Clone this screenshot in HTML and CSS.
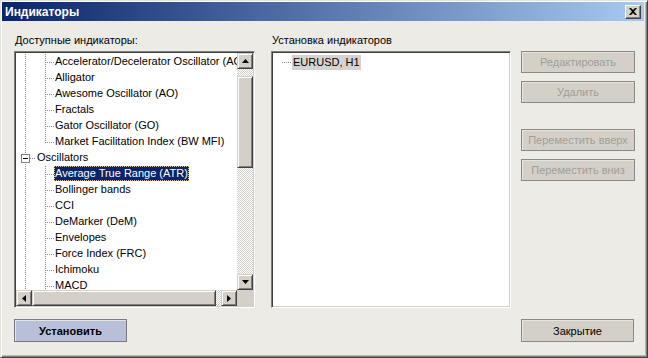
FILE: index.html
```html
<!DOCTYPE html>
<html>
<head>
  <title>Индикаторы</title>
  <meta charset="UTF-8">
  <link rel="stylesheet" href="styles.css">
</head>
<body>
  <div class="window">
    <div class="titlebar">
      <span class="title">Индикаторы</span>
      <button class="close-btn" title="Закрыть">
        <svg width="8" height="7" viewBox="0 0 8 7"><path d="M0 0h2l2 2 2-2h2L5 3.5 8 7H6L4 5 2 7H0l3-3.5z" fill="#000"/></svg>
      </button>
    </div>

    <div class="content">
      <div class="main-row">
        <!-- Доступные индикаторы -->
        <div class="panel panel-left">
          <div class="panel-label">Доступные индикаторы:</div>
          <div class="tree tree-scroll">
            <div class="tree-view">
              <div class="row"><span class="g g-line"></span><span class="g2 g-branch"></span><span class="label">Accelerator/Decelerator Oscillator (AC)</span></div>
              <div class="row"><span class="g g-line"></span><span class="g2 g-branch"></span><span class="label">Alligator</span></div>
              <div class="row"><span class="g g-line"></span><span class="g2 g-branch"></span><span class="label">Awesome Oscillator (AO)</span></div>
              <div class="row"><span class="g g-line"></span><span class="g2 g-branch"></span><span class="label">Fractals</span></div>
              <div class="row"><span class="g g-line"></span><span class="g2 g-branch"></span><span class="label">Gator Oscillator (GO)</span></div>
              <div class="row"><span class="g g-line"></span><span class="g2 g-last"></span><span class="label">Market Facilitation Index (BW MFI)</span></div>
              <div class="row"><span class="g g-line g-group"><span class="toggle"></span></span><span class="label">Oscillators</span></div>
              <div class="row"><span class="g g-line"></span><span class="g2 g-branch"></span><span class="label selected">Average True Range (ATR)</span></div>
              <div class="row"><span class="g g-line"></span><span class="g2 g-branch"></span><span class="label">Bollinger bands</span></div>
              <div class="row"><span class="g g-line"></span><span class="g2 g-branch"></span><span class="label">CCI</span></div>
              <div class="row"><span class="g g-line"></span><span class="g2 g-branch"></span><span class="label">DeMarker (DeM)</span></div>
              <div class="row"><span class="g g-line"></span><span class="g2 g-branch"></span><span class="label">Envelopes</span></div>
              <div class="row"><span class="g g-line"></span><span class="g2 g-branch"></span><span class="label">Force Index (FRC)</span></div>
              <div class="row"><span class="g g-line"></span><span class="g2 g-branch"></span><span class="label">Ichimoku</span></div>
              <div class="row"><span class="g g-line"></span><span class="g2 g-branch"></span><span class="label">MACD</span></div>
            </div>

            <div class="vscroll">
              <div class="sb-btn">
                <svg width="7" height="4" viewBox="0 0 7 4"><path d="M3.5 0L7 4H0z" fill="#000"/></svg>
              </div>
              <div class="sb-track sb-track-v"><div class="sb-thumb sb-thumb-v"></div></div>
              <div class="sb-btn">
                <svg width="7" height="4" viewBox="0 0 7 4"><path d="M0 0h7L3.5 4z" fill="#000"/></svg>
              </div>
            </div>

            <div class="hscroll">
              <div class="sb-btn">
                <svg width="4" height="7" viewBox="0 0 4 7"><path d="M0 3.5L4 0v7z" fill="#000"/></svg>
              </div>
              <div class="sb-track sb-track-h"><div class="sb-thumb sb-thumb-h"></div></div>
              <div class="sb-btn">
                <svg width="4" height="7" viewBox="0 0 4 7"><path d="M0 0l4 3.5L0 7z" fill="#000"/></svg>
              </div>
            </div>

            <div class="sb-corner"></div>
          </div>
        </div>

        <!-- Установка индикаторов -->
        <div class="panel panel-right">
          <div class="panel-label">Установка индикаторов</div>
          <div class="tree">
            <div class="tree-view">
              <div class="row"><span class="g3 g-single"></span><span class="label chart">EURUSD, H1</span></div>
            </div>
          </div>
        </div>

        <div class="side-buttons">
          <button class="btn btn-disabled">Редактировать</button>
          <button class="btn btn-disabled">Удалить</button>
          <button class="btn btn-disabled btn-spaced">Переместить вверх</button>
          <button class="btn btn-disabled">Переместить вниз</button>
        </div>
      </div>

      <div class="bottom-row">
        <button class="btn btn-default">Установить</button>
        <button class="btn">Закрытие</button>
      </div>
    </div>
  </div>
</body>
</html>
```

FILE: styles.css
```css
body {
  margin: 0;
  width: 648px;
  height: 358px;
  overflow: hidden;
  font-family: "Liberation Sans", Arial, sans-serif;
  font-size: 11px;
  color: #000;
}
.window {
  box-sizing: border-box;
  width: 648px;
  height: 358px;
  padding: 1px;
  background-color: #ecebe6;
  border: 1px solid;
  border-color: #e4e2dc #404040 #404040 #e4e2dc;
  box-shadow: inset 1px 1px #fff, inset -1px -1px #808080, inset -2px -2px #b8b5ad;
  display: flex;
  flex-direction: column;
}
.titlebar {
  height: 19px;
  margin-right: 2px;
  padding: 0 3px 0 3px;
  display: flex;
  justify-content: space-between;
  align-items: center;
  background: linear-gradient(to right, #0a246a, #a6caf0);
}
.title {
  color: #fff;
  font-weight: bold;
  font-size: 12px;
}
.close-btn {
  display: flex;
  align-items: center;
  justify-content: center;
  width: 16px;
  height: 14px;
  padding: 0;
  background-color: #d4d0c8;
  border: 1px solid;
  border-color: #fff #404040 #404040 #fff;
  box-shadow: inset -1px -1px #808080;
}
.content {
  flex: 1;
  padding: 13px 0 0 12px;
  display: flex;
  flex-direction: column;
}
.main-row {
  display: flex;
  align-items: flex-start;
}
.panel {
  display: flex;
  flex-direction: column;
}
.panel-left {
  width: 241px;
}
.panel-right {
  width: 240px;
  margin-left: 16px;
}
.panel-label {
  height: 13px;
  line-height: 13px;
  margin-bottom: 4px;
  padding-left: 1px;
}
.tree {
  box-sizing: border-box;
  height: 257px;
  background-color: #fff;
  border: 1px solid;
  border-color: #808080 #fff #fff #808080;
  box-shadow: inset 1px 1px #404040, inset -1px -1px #d4d0c8;
  padding: 2px 2px 2px 2px;
  overflow: hidden;
}
.tree-scroll {
  display: grid;
  grid-template-columns: 1fr 16px;
  grid-template-rows: 1fr 16px;
  padding: 1px;
}
.tree-view {
  overflow: hidden;
  white-space: nowrap;
}
.tree-scroll .tree-view {
  padding-top: 1px;
}
.row {
  display: flex;
  height: 16px;
  line-height: 16px;
}
.g {
  flex: none;
  width: 20px;
  height: 16px;
}
.g2 {
  flex: none;
  width: 18px;
  height: 16px;
}
.g3 {
  flex: none;
  width: 18px;
  height: 16px;
}
/* dotted tree lines */
.g-line {
  background: repeating-linear-gradient(to bottom, #8a8a8a 0 1px, transparent 1px 2px) 9px 0 / 1px 100% no-repeat;
}
.g-branch {
  background:
    repeating-linear-gradient(to right, #8a8a8a 0 1px, transparent 1px 2px) 9px 8px / 9px 1px no-repeat,
    repeating-linear-gradient(to bottom, #8a8a8a 0 1px, transparent 1px 2px) 9px 0 / 1px 100% no-repeat;
}
.g-last {
  background:
    repeating-linear-gradient(to right, #8a8a8a 0 1px, transparent 1px 2px) 9px 8px / 9px 1px no-repeat,
    repeating-linear-gradient(to bottom, #8a8a8a 0 1px, transparent 1px 2px) 9px 0 / 1px 9px no-repeat;
}
.g-group {
  display: flex;
  align-items: center;
  background:
    repeating-linear-gradient(to right, #8a8a8a 0 1px, transparent 1px 2px) 14px 8px / 6px 1px no-repeat,
    repeating-linear-gradient(to bottom, #8a8a8a 0 1px, transparent 1px 2px) 9px 0 / 1px 100% no-repeat;
}
.g-single {
  background: repeating-linear-gradient(to right, #8a8a8a 0 1px, transparent 1px 2px) 8px 8px / 10px 1px no-repeat;
}
.toggle {
  box-sizing: border-box;
  width: 9px;
  height: 9px;
  margin-left: 5px;
  border: 1px solid #808080;
  background: linear-gradient(#000, #000) center / 5px 1px no-repeat, #fff;
}
.label {
  padding: 0 1px;
  height: 15px;
  line-height: 15px;
}
.selected {
  background-color: #0a246a;
  color: #fff;
  outline: 1px dotted #e8c060;
  outline-offset: -1px;
}
.chart {
  background-color: #d6d3ce;
  margin-top: 1px;
}
/* scrollbars */
.vscroll {
  display: flex;
  flex-direction: column;
}
.hscroll {
  display: flex;
}
.sb-btn {
  box-sizing: border-box;
  flex: none;
  width: 16px;
  height: 16px;
  display: flex;
  align-items: center;
  justify-content: center;
  background-color: #d4d0c8;
  border: 1px solid;
  border-color: #d4d0c8 #404040 #404040 #d4d0c8;
  box-shadow: inset 1px 1px #fff, inset -1px -1px #808080;
}
.sb-track {
  flex: 1;
  background: repeating-conic-gradient(#fff 0 25%, #d4d0c8 0 50%) 0 0 / 2px 2px;
}
.sb-thumb {
  box-sizing: border-box;
  background-color: #d4d0c8;
  border: 1px solid;
  border-color: #d4d0c8 #404040 #404040 #d4d0c8;
  box-shadow: inset 1px 1px #fff, inset -1px -1px #808080;
}
.sb-thumb-v {
  margin-top: 7px;
  height: 92px;
}
.sb-thumb-h {
  width: 184px;
  height: 16px;
}
.sb-corner {
  background-color: #d4d0c8;
}
/* buttons */
.side-buttons {
  margin-left: 10px;
  padding-top: 17px;
  display: flex;
  flex-direction: column;
  gap: 8px;
}
.btn {
  box-sizing: border-box;
  width: 114px;
  height: 22px;
  padding: 0;
  font-family: "Liberation Sans", Arial, sans-serif;
  font-size: 11px;
  color: #000;
  background-color: #d4d0c8;
  border: 1px solid #8c8983;
  box-shadow: inset 1px 1px #e6e4de;
}
.btn-disabled {
  color: #a19e97;
}
.btn-spaced {
  margin-top: 18px;
}
.bottom-row {
  margin-top: 11px;
  width: 620px;
  display: flex;
  justify-content: space-between;
}
.bottom-row .btn {
  width: 113px;
  height: 23px;
}
.btn-default {
  background-color: #b7bfd9;
  font-weight: bold;
  border-color: #7a7a80;
}
```
